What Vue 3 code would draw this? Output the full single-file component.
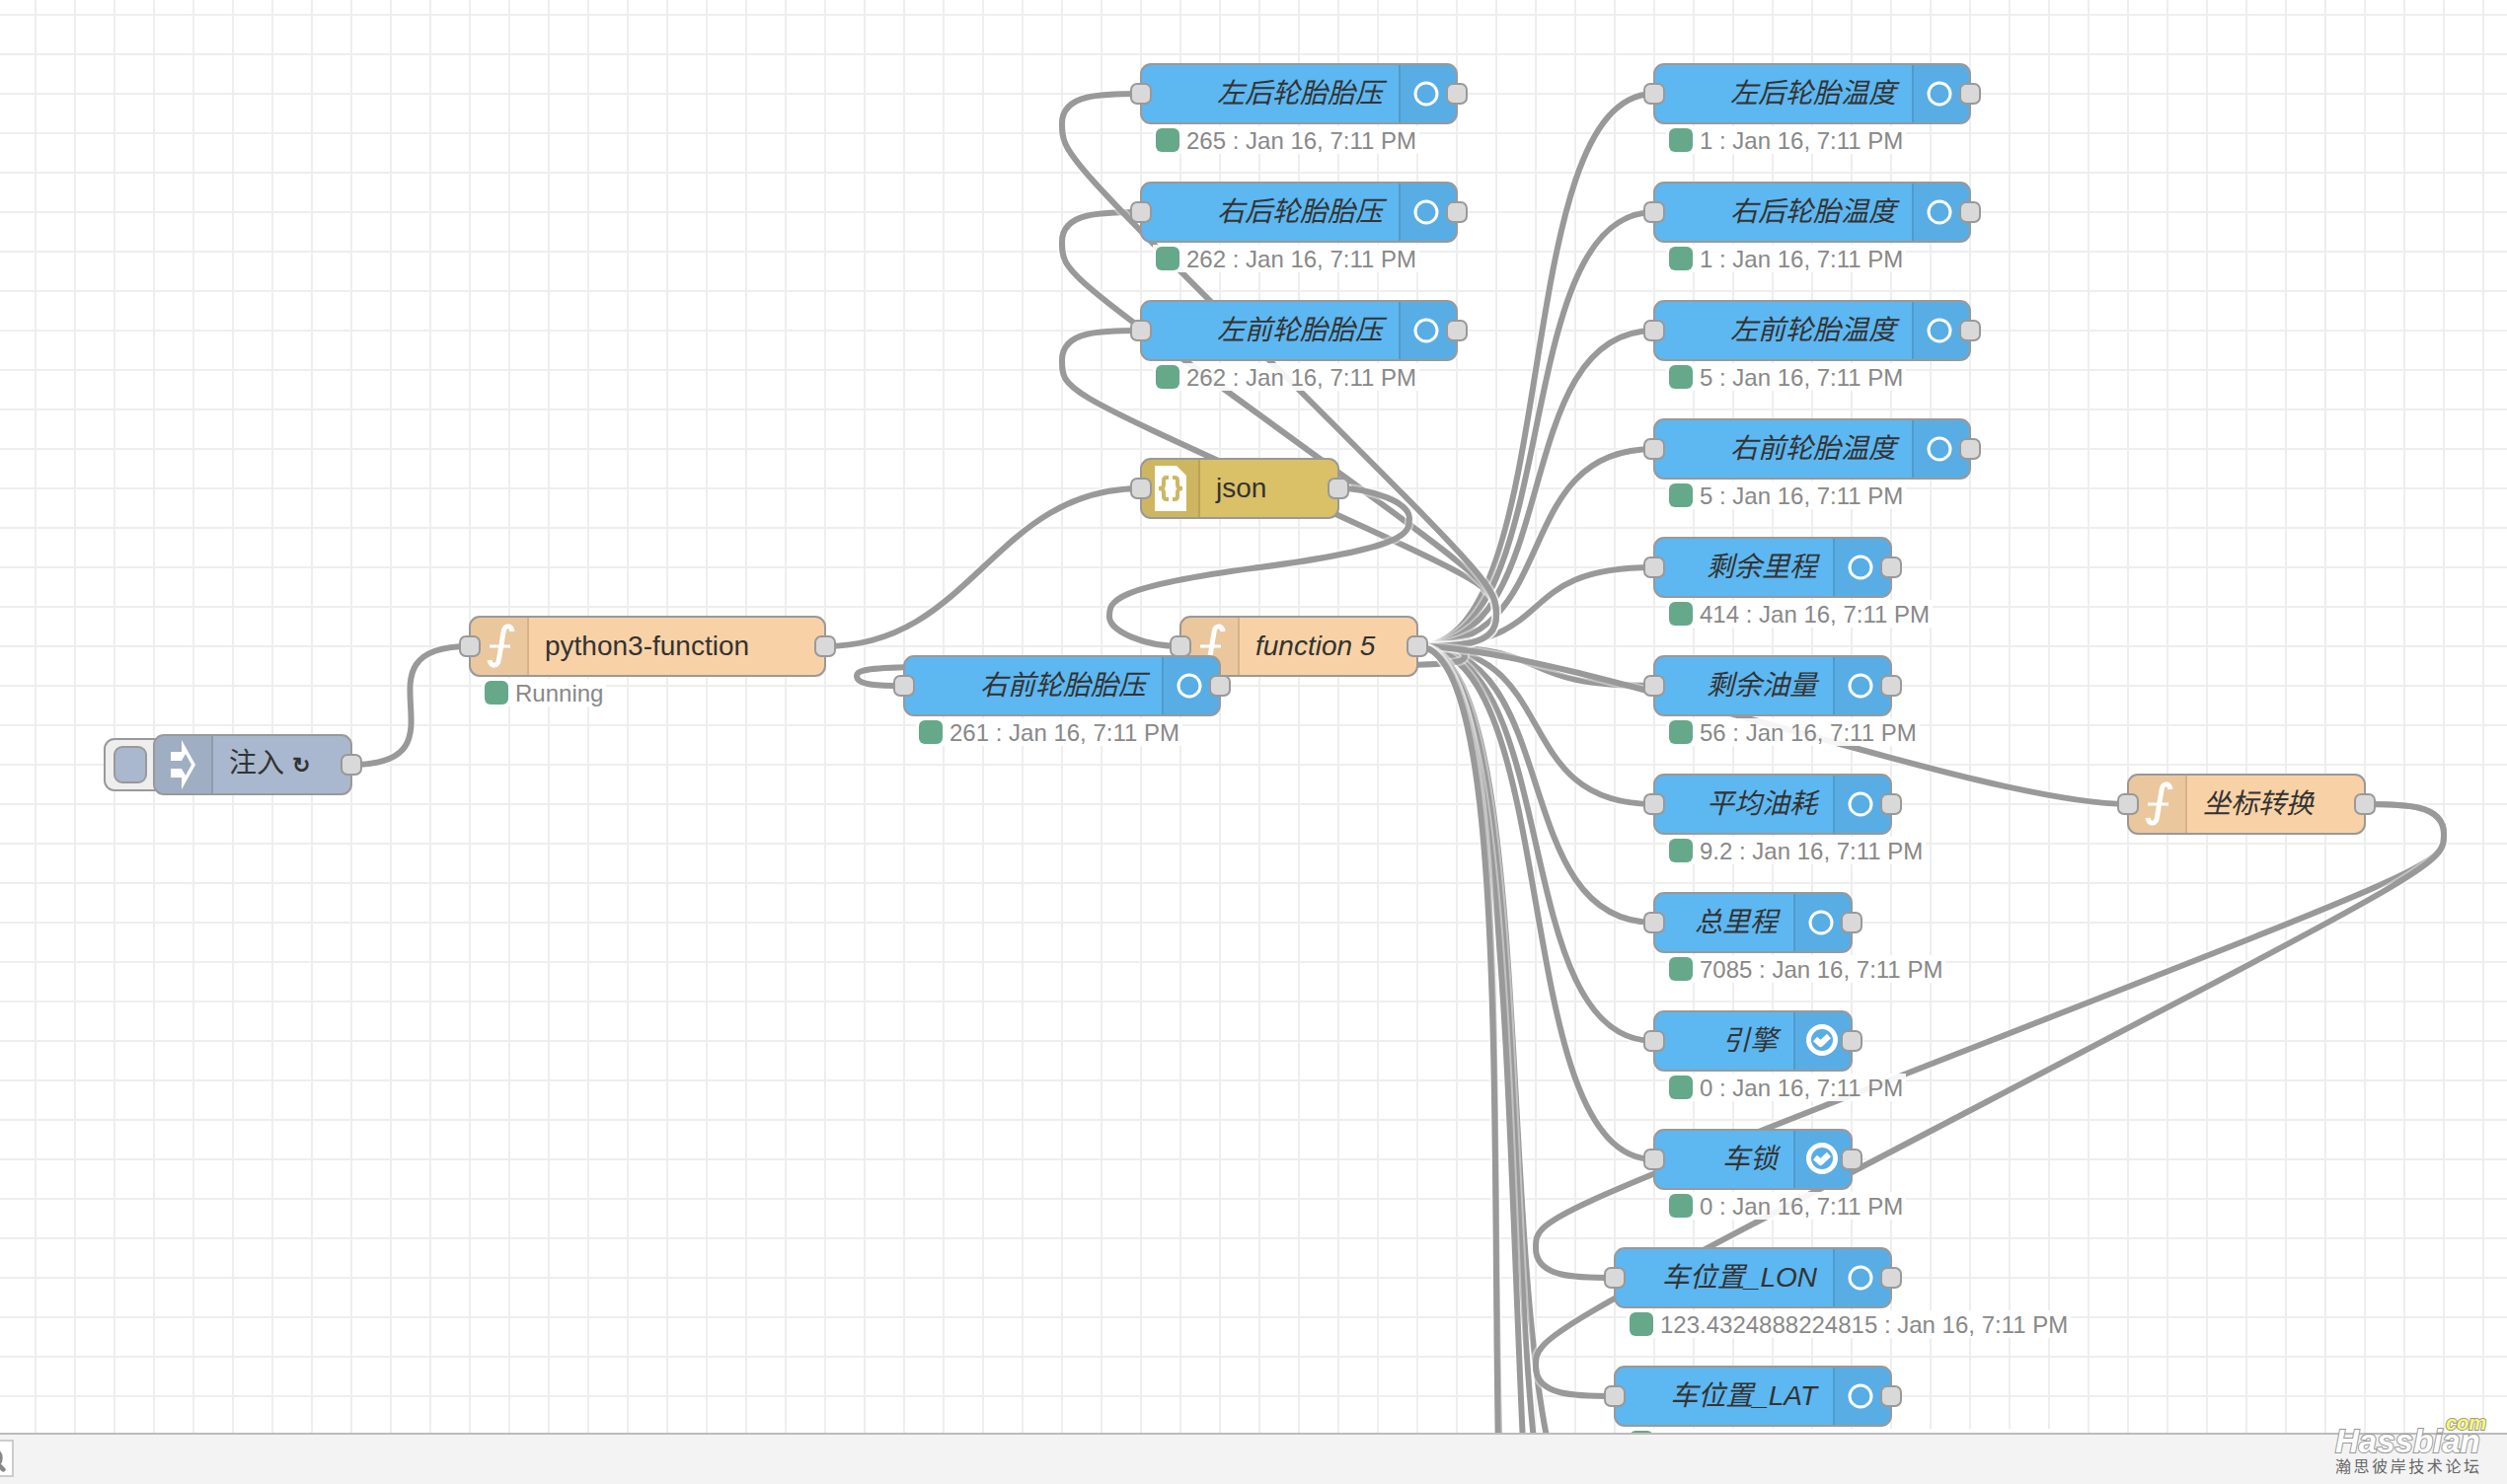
<script setup>
const NODE_W = 200
const NODE_H = 60
const STAMP = ' : Jan 16, 7:11 PM'

const sensor = (id, x, y, w, label, value, icon = 'ring') => ({
  id, x, y, w, label, icon, kind: 'sensor', italic: true, side: 'right', input: true, status: value + STAMP,
})

const nodes = [
  { id: 'inject', x: 156, y: 745, w: 200, label: '注入 ', repeat: true, icon: 'inject', kind: 'inject', side: 'left' },
  { id: 'python', x: 476, y: 625, w: 360, label: 'python3-function', icon: 'fn', kind: 'function', side: 'left', input: true, status: 'Running' },
  { id: 'json', x: 1156, y: 465, w: 200, label: 'json', icon: 'json', kind: 'json', side: 'left', input: true },
  { id: 'fn5', x: 1196, y: 625, w: 240, label: 'function 5', icon: 'fn', kind: 'function', side: 'left', input: true, italic: true },
  { id: 'coord', x: 2156, y: 785, w: 240, label: '坐标转换', icon: 'fn', kind: 'function', side: 'left', input: true, italic: true },
  sensor('rlp', 1156, 65, 320, '左后轮胎胎压', '265'),
  sensor('rrp', 1156, 185, 320, '右后轮胎胎压', '262'),
  sensor('flp', 1156, 305, 320, '左前轮胎胎压', '262'),
  sensor('frp', 916, 665, 320, '右前轮胎胎压', '261'),
  sensor('rlt', 1676, 65, 320, '左后轮胎温度', '1'),
  sensor('rrt', 1676, 185, 320, '右后轮胎温度', '1'),
  sensor('flt', 1676, 305, 320, '左前轮胎温度', '5'),
  sensor('frt', 1676, 425, 320, '右前轮胎温度', '5'),
  sensor('range', 1676, 545, 240, '剩余里程', '414'),
  sensor('fuel', 1676, 665, 240, '剩余油量', '56'),
  sensor('avg', 1676, 785, 240, '平均油耗', '9.2'),
  sensor('total', 1676, 905, 200, '总里程', '7085'),
  sensor('engine', 1676, 1025, 200, '引擎', '0', 'check'),
  sensor('lock', 1676, 1145, 200, '车锁', '0', 'check'),
  sensor('lon', 1636, 1265, 280, '车位置_LON', '123.4324888224815'),
  { ...sensor('lat', 1636, 1385, 280, '车位置_LAT', ''), status: ' ', statusWidth: 440 },
]

const byId = Object.fromEntries(nodes.map((n) => [n.id, n]))
const inPort = (id) => [byId[id].x, byId[id].y + NODE_H / 2]
const outPort = (id) => [byId[id].x + byId[id].w, byId[id].y + NODE_H / 2]

function wire([ox, oy], [dx0, dy0]) {
  const dx = dx0 - ox
  const dy = dy0 - oy
  if (dx > 0) {
    const delta = Math.hypot(dx, dy)
    const scale = delta < NODE_W ? 0.75 - 0.75 * ((NODE_W - delta) / NODE_W) : 0.75
    const reach = NODE_W * scale
    return `M${ox} ${oy} C${ox + reach} ${oy} ${dx0 - reach} ${dy0} ${dx0} ${dy0}`
  }
  // Backward wires bend out of the source, cross the middle and bend into the target.
  const scale = 0.4 - 0.2 * Math.max(0, (NODE_W - Math.min(Math.abs(dx), Math.abs(dy))) / NODE_W)
  const h = NODE_H / 2
  const down = dy > 0
  const near = down ? Math.min : Math.max
  const far = down ? Math.max : Math.min
  const s = down ? 1 : -1
  const midX = dx0 - dx / 2
  const midY = dy0 - dy / 2
  const y1 = (dy0 + midY) / 2
  const topX = ox + NODE_W * scale
  const topY = near(y1 - dy / 2, oy + s * h)
  const botX = dx0 - NODE_W * scale
  const botY = far(y1, dy0 - s * h)
  const x1 = (ox + topX) / 2
  const cp = [
    [x1, oy],
    [topX, far(oy, topY - s * h)],
    [x1, near(midY, topY + s * h)],
    [botX, far(midY, botY - s * h)],
    [(dx0 + botX) / 2, dy0],
  ]
  if (cp[2][1] === topY + s * h) {
    if (Math.abs(dy) < h * 10) {
      cp[1][1] = topY - (s * h) / 2
      cp[3][1] = botY - (s * h) / 2
    }
    cp[2][0] = topX
  }
  return `M${ox} ${oy} C${cp[0]} ${cp[1]} ${topX} ${topY} S${cp[2]} ${midX} ${midY} S${cp[3]} ${botX} ${botY} S${cp[4]} ${dx0} ${dy0}`
}

const link = (from, to) => wire(outPort(from), Array.isArray(to) ? to : inPort(to))

const wires = [
  link('inject', 'python'),
  link('python', 'json'),
  ...['rlt', 'rrt', 'flt', 'frt', 'range', 'fuel', 'avg', 'total', 'engine', 'lock', 'frp', 'flp', 'rrp', 'rlp', 'coord'].map((id) => link('fn5', id)),
  ...[[1636, 1575], [1636, 1695], [1636, 1935], [1596, 1815], [1596, 1935]].map((p) => link('fn5', p)),
  link('json', 'fn5'),
  link('coord', 'lon'),
  link('coord', 'lat'),
]
</script>

<template>
  <div class="editor">
    <main class="canvas">
      <svg class="wires" aria-hidden="true">
        <g v-for="(d, i) in wires" :key="i">
          <path class="wire-outline" :d="d" />
          <path class="wire" :d="d" />
        </g>
      </svg>

      <div
        v-for="n in nodes"
        :key="n.id"
        class="node"
        :class="[n.kind, n.side, { italic: n.italic }]"
        :style="{ left: n.x + 'px', top: n.y + 'px', width: n.w + 'px' }"
      >
        <div v-if="n.kind === 'inject'" class="trigger">
          <button type="button" aria-label="注入"></button>
        </div>
        <div class="body">
          <div class="icon">
            <svg viewBox="0 0 60 60" width="60" height="60">
              <g v-if="n.icon === 'fn'" fill="none" stroke="#fff">
                <path stroke-width="5" d="M43 15C42 8 35 8 34 16L29.500 43C28.500 51 21 51 20 44" />
                <path stroke-width="3" d="M20 30H41" />
              </g>
              <path v-else-if="n.icon === 'inject'" fill="#fff" d="M17 17H28V5L42 30L28 55V43H17V34H28L32 41L38 30L32 19L28 26H17Z" />
              <g v-else-if="n.icon === 'json'">
                <path fill="#fff" d="M14 7H36L46 17V53H14Z" />
                <path class="brace" d="M28 19H26Q23 19 23 22V26Q23 30 18 30Q23 30 23 34V38Q23 41 26 41H28M32 19H34Q37 19 37 22V26Q37 30 42 30Q37 30 37 34V38Q37 41 34 41H32" />
              </g>
              <circle v-else-if="n.icon === 'ring'" cx="29" cy="30" r="11" fill="none" stroke="#fff" stroke-width="3" />
              <g v-else fill="none" stroke="#fff">
                <circle cx="30" cy="29" r="13.500" stroke-width="5" />
                <path stroke-width="6" stroke-linejoin="round" d="M23 28L28.500 33L37 25" />
              </g>
            </svg>
          </div>
          <span class="label">{{ n.label }}<span v-if="n.repeat" class="repeat">↻</span></span>
        </div>
        <i v-if="n.input" class="port in"></i>
        <i class="port out"></i>
        <div v-if="n.status" class="status" :style="n.statusWidth ? { width: n.statusWidth + 'px' } : null">
          <i class="dot"></i><span>{{ n.status }}</span>
        </div>
      </div>
    </main>

    <footer class="footer">
      <button type="button" class="search" aria-label="Search">
        <svg viewBox="0 0 24 24" width="28" height="28" fill="none" stroke="#888">
          <circle cx="10" cy="10" r="8" stroke-width="3" />
          <path d="M15 15L20 20" stroke-width="4" stroke-linecap="round" />
        </svg>
      </button>
    </footer>

    <div class="watermark">
      <span class="com">com</span>
      <span class="brand">Hassbian</span>
      <span class="tagline">瀚思彼岸技术论坛</span>
    </div>
  </div>
</template>

<style>
body {
  margin: 0;
}
</style>

<style scoped>
.editor {
  position: relative;
  display: flex;
  flex-direction: column;
  height: 100vh;
  overflow: hidden;
  background: #fff;
  font-family: "Liberation Sans", "Noto Sans CJK SC", sans-serif;
  color: #333;
}

.canvas {
  position: relative;
  flex: 1;
  min-height: 0;
  overflow: hidden;
  background-color: #fff;
  background-image:
    linear-gradient(to right, #eee 2px, transparent 2px),
    linear-gradient(to bottom, #eee 2px, transparent 2px);
  background-size: 40px 40px;
  background-position: 35px 14px;
}

.wires {
  position: absolute;
  inset: 0;
  width: 100%;
  height: 100%;
  overflow: visible;
}

.wire,
.wire-outline {
  fill: none;
}

.wire {
  stroke: #999;
  stroke-width: 6px;
}

.wire-outline {
  stroke: #fff;
  stroke-opacity: 0.4;
  stroke-width: 10px;
}

.node {
  position: absolute;
  height: 60px;
}

.body {
  position: absolute;
  inset: -1px;
  display: flex;
  align-items: center;
  box-sizing: border-box;
  border: 2px solid #999;
  border-radius: 11px;
  overflow: hidden;
}

.right .body {
  flex-direction: row-reverse;
}

.inject .body {
  background: #a9b8cf;
}

.function .body {
  background: #f8d2a6;
}

.json .body {
  background: #dac066;
}

.sensor .body {
  background: #5db7f1;
}

.icon {
  flex: none;
  box-sizing: border-box;
  width: 59px;
  height: 60px;
  background: rgba(0, 0, 0, 0.05);
}

.left .icon {
  border-right: 2px solid rgba(0, 0, 0, 0.1);
}

.right .icon {
  width: 58px;
  border-left: 2px solid rgba(0, 0, 0, 0.1);
}

.icon svg {
  display: block;
  margin-left: -1px;
}

.right .icon svg {
  margin-left: -3px;
}

.brace {
  fill: none;
  stroke: #cfb661;
  stroke-width: 4px;
}

.label {
  padding: 0 16px;
  font-size: 28px;
  line-height: 40px;
  white-space: pre;
}

.italic .label {
  font-style: italic;
}

.repeat {
  font-size: 22px;
  font-weight: bold;
}

.port {
  position: absolute;
  top: 19px;
  box-sizing: border-box;
  width: 22px;
  height: 22px;
  border: 2px solid #999;
  border-radius: 7px;
  background: #d9d9d9;
}

.in {
  left: -11px;
}

.out {
  right: -11px;
}

.status {
  position: absolute;
  top: 63px;
  left: 12px;
  display: flex;
  align-items: center;
  gap: 7px;
  height: 28px;
  padding: 0 3px;
  background: rgba(255, 255, 255, 0.9);
  color: #888;
  font-size: 24px;
  line-height: 28px;
  white-space: pre;
}

.status span {
  padding-top: 2px;
}

.dot {
  width: 24px;
  height: 24px;
  border-radius: 6px;
  background: #66a88a;
}

.trigger {
  position: absolute;
  top: 3px;
  left: -51px;
  display: flex;
  align-items: center;
  box-sizing: border-box;
  width: 66px;
  height: 54px;
  padding-left: 8px;
  border: 2px solid #999;
  border-radius: 11px;
  background: #eee;
}

.trigger button {
  box-sizing: border-box;
  width: 34px;
  height: 38px;
  padding: 0;
  border: 2px solid #999;
  border-radius: 9px;
  background: #a9b8cf;
}

.footer {
  display: flex;
  align-items: center;
  box-sizing: border-box;
  height: 52px;
  padding-bottom: 2px;
  border-top: 2px solid #bbb;
  background: #f3f3f3;
}

.search {
  display: flex;
  align-items: center;
  justify-content: center;
  box-sizing: border-box;
  width: 40px;
  height: 38px;
  margin-left: -26px;
  padding: 4px 0 0;
  border: 2px solid #ccc;
  background: #fff;
}

.watermark {
  position: absolute;
  right: 24px;
  bottom: 7px;
  display: flex;
  flex-direction: column;
  width: 150px;
}

.com,
.brand {
  font-style: italic;
  font-weight: bold;
  paint-order: stroke;
  -webkit-text-stroke: 2px #999;
}

.com {
  position: absolute;
  top: -12px;
  right: -3px;
  color: #fbf870;
  font-size: 20px;
  line-height: 18px;
}

.brand {
  color: #fdfdfd;
  font-size: 33px;
  line-height: 32px;
}

.tagline {
  width: 146px;
  color: #666;
  font-size: 16px;
  line-height: 20px;
  text-align: justify;
  text-align-last: justify;
}
</style>
